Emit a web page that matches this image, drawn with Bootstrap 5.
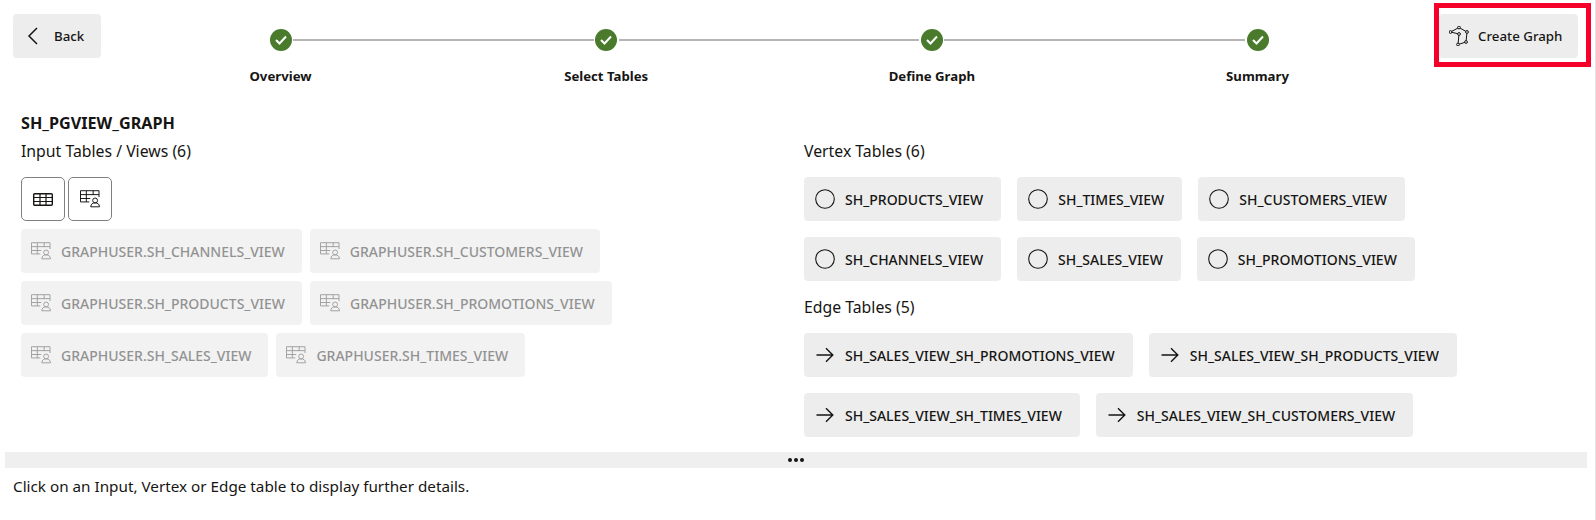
<!DOCTYPE html>
<html lang="en">
<head>
<meta charset="UTF-8">
<title>Create Graph</title>
<link rel="stylesheet" href="https://cdn.jsdelivr.net/npm/bootstrap@5.3.3/dist/css/bootstrap.min.css">
<style>
body { font-family: "Noto Sans", "Open Sans", sans-serif; font-size: 15px; color: #161513; background: #fff; overflow: hidden; border-right: 1px solid #e6e6e6; }
.top-bar { padding: 14px 4px 0 13px; height: 112px; }
.grey-btn { background: #ededed; border: 0; border-radius: 4px; height: 44px; font-size: 13.3px; font-weight: 500; color: #161513; }
.grey-btn span { padding-top: 2px; }
.back-btn { width: 88px; gap: 15px; padding: 0 0 0 14px; }
.create-btn { width: 139px; gap: 9px; padding: 0 0 0 10px; }
.red-frame { border: 5px solid #f4002b; padding: 6px 8px 4px 0; margin-top: -11px; }
.stepper { width: 1042px; margin-left: 147px; }
.step-item { width: 65px; }
.step-dot { width: 22px; height: 22px; border-radius: 50%; background: #4a7a2c; margin-top: 15px; }
.step-line { height: 2px; background: #b5b5b5; flex-grow: 1; margin-top: 25px; margin-left: -20px; margin-right: -20px; }
.step-name { font-size: 13.2px; font-weight: 700; margin-top: 15px; white-space: nowrap; line-height: 20px; }
.main-area { height: 340px; }
.left-pane { width: 804px; padding: 1px 0 0 21px; }
.graph-title { font-size: 16.2px; font-weight: 700; line-height: 20px; margin-bottom: 8px; }
.pane-head { font-size: 15.8px; line-height: 20px; }
.toggle-row { gap: 3px; margin-top: 16px; }
.square-btn { width: 44px; height: 44px; background: #fff; border: 1px solid #808080; border-radius: 5px; }
.chip { height: 44px; border-radius: 4px; font-size: 14px; font-weight: 500; background: #ededed; color: #161513; padding: 0 18px 0 11px; gap: 10px; white-space: nowrap; }
.chip-off { background: #f2f2f2; color: #929292; padding: 0 17px 0 10px; }
.chip-off svg { color: #a0a0a0; }
.chip-row { gap: 8px; margin-top: 8px; }
.vert-row { gap: 16px; margin-top: 16px; }
.head-vertex { margin-top: 29px; }
.head-edge { margin-top: 16px; }
.splitter { height: 16px; background: #efefef; margin: 0 8px 0 5px; gap: 2px; }
.splitter i { width: 4px; height: 4px; border-radius: 50%; background: #161513; display: block; }
.detail-note { font-size: 15.25px; padding: 8px 13px; line-height: 20px; }
</style>
</head>
<body class="min-vh-100">

<!-- wizard header -->
<div class="top-bar d-flex align-items-start">
  <button class="grey-btn back-btn d-flex align-items-center">
    <svg width="12" height="20" viewBox="0 0 12 20" fill="none" stroke="#161513" stroke-width="1.500"><path d="M10 2 2 10l8 8"/></svg>
    <span>Back</span>
  </button>
  <div class="stepper d-flex align-items-start">
    <div class="step-item d-flex flex-column align-items-center flex-shrink-0">
      <div class="step-dot d-flex align-items-center justify-content-center"><svg width="12" height="10" viewBox="0 0 12 10" fill="none" stroke="#fff" stroke-width="2"><path d="M1 5l3.500 3.500L11 1.500"/></svg></div>
      <div class="step-name">Overview</div>
    </div>
    <div class="step-line"></div>
    <div class="step-item d-flex flex-column align-items-center flex-shrink-0">
      <div class="step-dot d-flex align-items-center justify-content-center"><svg width="12" height="10" viewBox="0 0 12 10" fill="none" stroke="#fff" stroke-width="2"><path d="M1 5l3.500 3.500L11 1.500"/></svg></div>
      <div class="step-name">Select Tables</div>
    </div>
    <div class="step-line"></div>
    <div class="step-item d-flex flex-column align-items-center flex-shrink-0">
      <div class="step-dot d-flex align-items-center justify-content-center"><svg width="12" height="10" viewBox="0 0 12 10" fill="none" stroke="#fff" stroke-width="2"><path d="M1 5l3.500 3.500L11 1.500"/></svg></div>
      <div class="step-name">Define Graph</div>
    </div>
    <div class="step-line"></div>
    <div class="step-item d-flex flex-column align-items-center flex-shrink-0">
      <div class="step-dot d-flex align-items-center justify-content-center"><svg width="12" height="10" viewBox="0 0 12 10" fill="none" stroke="#fff" stroke-width="2"><path d="M1 5l3.500 3.500L11 1.500"/></svg></div>
      <div class="step-name">Summary</div>
    </div>
  </div>
  <div class="ms-auto red-frame">
    <button class="grey-btn create-btn d-flex align-items-center">
      <svg width="20" height="20" viewBox="0 0 20 20" fill="none" stroke="#161513" stroke-width="1"><path d="M1.500 6 10 1.500 18 6 17 16 9 18.500 10 8z"/><g fill="#ededed"><circle cx="1.500" cy="6" r="1.400"/><circle cx="10" cy="1.500" r="1.400"/><circle cx="18" cy="6" r="1.400"/><circle cx="10" cy="8" r="1.400"/><circle cx="17" cy="16" r="1.400"/><circle cx="9" cy="18.500" r="1.400"/></g></svg>
      <span>Create Graph</span>
    </button>
  </div>
</div>

<div class="main-area d-flex">
  <!-- input tables -->
  <div class="left-pane flex-shrink-0">
    <div class="graph-title">SH_PGVIEW_GRAPH</div>
    <div class="pane-head">Input Tables / Views (6)</div>
    <div class="d-flex toggle-row">
      <button class="square-btn d-flex align-items-center justify-content-center p-0">
        <svg width="20" height="13" viewBox="0 0 20 13" fill="none" stroke="#161513" stroke-width="1.200"><rect x="0.700" y="0.700" width="18.600" height="11.600" rx="1" stroke-width="1.400"/><path d="M1 4.500h18M1 8.500h18M7 1v11M13 1v11"/></svg>
      </button>
      <button class="square-btn d-flex align-items-center justify-content-center p-0">
        <svg width="20" height="18" viewBox="0.500 1 20.500 18" fill="none" stroke="#161513" stroke-width="1"><path d="M1 1.500h19V8M1 1.500V13h9M1 5.500h19M1 9.500h10M7 1.500V13M14 1.500V6"/><circle cx="16" cy="11.500" r="2.500"/><path d="M11.500 18c.3-3 2-4 4.500-4s4.200 1 4.500 4z"/></svg>
      </button>
    </div>
    <div class="d-flex chip-row">
      <div class="chip chip-off d-flex align-items-center"><svg width="20" height="18" viewBox="0.500 1 20.500 18" fill="none" stroke="currentColor" stroke-width="1"><path d="M1 1.500h19V8M1 1.500V13h9M1 5.500h19M1 9.500h10M7 1.500V13M14 1.500V6"/><circle cx="16" cy="11.500" r="2.500"/><path d="M11.500 18c.3-3 2-4 4.500-4s4.200 1 4.500 4z"/></svg><span>GRAPHUSER.SH_CHANNELS_VIEW</span></div>
      <div class="chip chip-off d-flex align-items-center"><svg width="20" height="18" viewBox="0.500 1 20.500 18" fill="none" stroke="currentColor" stroke-width="1"><path d="M1 1.500h19V8M1 1.500V13h9M1 5.500h19M1 9.500h10M7 1.500V13M14 1.500V6"/><circle cx="16" cy="11.500" r="2.500"/><path d="M11.500 18c.3-3 2-4 4.500-4s4.200 1 4.500 4z"/></svg><span>GRAPHUSER.SH_CUSTOMERS_VIEW</span></div>
    </div>
    <div class="d-flex chip-row">
      <div class="chip chip-off d-flex align-items-center"><svg width="20" height="18" viewBox="0.500 1 20.500 18" fill="none" stroke="currentColor" stroke-width="1"><path d="M1 1.500h19V8M1 1.500V13h9M1 5.500h19M1 9.500h10M7 1.500V13M14 1.500V6"/><circle cx="16" cy="11.500" r="2.500"/><path d="M11.500 18c.3-3 2-4 4.500-4s4.200 1 4.500 4z"/></svg><span>GRAPHUSER.SH_PRODUCTS_VIEW</span></div>
      <div class="chip chip-off d-flex align-items-center"><svg width="20" height="18" viewBox="0.500 1 20.500 18" fill="none" stroke="currentColor" stroke-width="1"><path d="M1 1.500h19V8M1 1.500V13h9M1 5.500h19M1 9.500h10M7 1.500V13M14 1.500V6"/><circle cx="16" cy="11.500" r="2.500"/><path d="M11.500 18c.3-3 2-4 4.500-4s4.200 1 4.500 4z"/></svg><span>GRAPHUSER.SH_PROMOTIONS_VIEW</span></div>
    </div>
    <div class="d-flex chip-row">
      <div class="chip chip-off d-flex align-items-center"><svg width="20" height="18" viewBox="0.500 1 20.500 18" fill="none" stroke="currentColor" stroke-width="1"><path d="M1 1.500h19V8M1 1.500V13h9M1 5.500h19M1 9.500h10M7 1.500V13M14 1.500V6"/><circle cx="16" cy="11.500" r="2.500"/><path d="M11.500 18c.3-3 2-4 4.500-4s4.200 1 4.500 4z"/></svg><span>GRAPHUSER.SH_SALES_VIEW</span></div>
      <div class="chip chip-off d-flex align-items-center"><svg width="20" height="18" viewBox="0.500 1 20.500 18" fill="none" stroke="currentColor" stroke-width="1"><path d="M1 1.500h19V8M1 1.500V13h9M1 5.500h19M1 9.500h10M7 1.500V13M14 1.500V6"/><circle cx="16" cy="11.500" r="2.500"/><path d="M11.500 18c.3-3 2-4 4.500-4s4.200 1 4.500 4z"/></svg><span>GRAPHUSER.SH_TIMES_VIEW</span></div>
    </div>
  </div>

  <!-- vertex and edge tables -->
  <div class="flex-grow-1">
    <div class="pane-head head-vertex">Vertex Tables (6)</div>
    <div class="d-flex vert-row">
      <div class="chip d-flex align-items-center"><svg width="20" height="20" viewBox="0 0 20 20" fill="none" stroke="#161513" stroke-width="1.100"><circle cx="10" cy="10" r="9.300"/></svg><span>SH_PRODUCTS_VIEW</span></div>
      <div class="chip d-flex align-items-center"><svg width="20" height="20" viewBox="0 0 20 20" fill="none" stroke="#161513" stroke-width="1.100"><circle cx="10" cy="10" r="9.300"/></svg><span>SH_TIMES_VIEW</span></div>
      <div class="chip d-flex align-items-center"><svg width="20" height="20" viewBox="0 0 20 20" fill="none" stroke="#161513" stroke-width="1.100"><circle cx="10" cy="10" r="9.300"/></svg><span>SH_CUSTOMERS_VIEW</span></div>
    </div>
    <div class="d-flex vert-row">
      <div class="chip d-flex align-items-center"><svg width="20" height="20" viewBox="0 0 20 20" fill="none" stroke="#161513" stroke-width="1.100"><circle cx="10" cy="10" r="9.300"/></svg><span>SH_CHANNELS_VIEW</span></div>
      <div class="chip d-flex align-items-center"><svg width="20" height="20" viewBox="0 0 20 20" fill="none" stroke="#161513" stroke-width="1.100"><circle cx="10" cy="10" r="9.300"/></svg><span>SH_SALES_VIEW</span></div>
      <div class="chip d-flex align-items-center"><svg width="20" height="20" viewBox="0 0 20 20" fill="none" stroke="#161513" stroke-width="1.100"><circle cx="10" cy="10" r="9.300"/></svg><span>SH_PROMOTIONS_VIEW</span></div>
    </div>
    <div class="pane-head head-edge">Edge Tables (5)</div>
    <div class="d-flex vert-row">
      <div class="chip d-flex align-items-center"><svg width="20" height="20" viewBox="0 0 20 20" fill="none" stroke="#161513" stroke-width="1.400"><path d="M1.500 10h16M11 3.200l6.800 6.800-6.800 6.800"/></svg><span>SH_SALES_VIEW_SH_PROMOTIONS_VIEW</span></div>
      <div class="chip d-flex align-items-center"><svg width="20" height="20" viewBox="0 0 20 20" fill="none" stroke="#161513" stroke-width="1.400"><path d="M1.500 10h16M11 3.200l6.800 6.800-6.800 6.800"/></svg><span>SH_SALES_VIEW_SH_PRODUCTS_VIEW</span></div>
    </div>
    <div class="d-flex vert-row">
      <div class="chip d-flex align-items-center"><svg width="20" height="20" viewBox="0 0 20 20" fill="none" stroke="#161513" stroke-width="1.400"><path d="M1.500 10h16M11 3.200l6.800 6.800-6.800 6.800"/></svg><span>SH_SALES_VIEW_SH_TIMES_VIEW</span></div>
      <div class="chip d-flex align-items-center"><svg width="20" height="20" viewBox="0 0 20 20" fill="none" stroke="#161513" stroke-width="1.400"><path d="M1.500 10h16M11 3.200l6.800 6.800-6.800 6.800"/></svg><span>SH_SALES_VIEW_SH_CUSTOMERS_VIEW</span></div>
    </div>
  </div>
</div>

<div class="splitter d-flex align-items-center justify-content-center"><i></i><i></i><i></i></div>
<div class="detail-note">Click on an Input, Vertex or Edge table to display further details.</div>

<script src="https://cdn.jsdelivr.net/npm/bootstrap@5.3.3/dist/js/bootstrap.bundle.min.js"></script>
</body>
</html>
